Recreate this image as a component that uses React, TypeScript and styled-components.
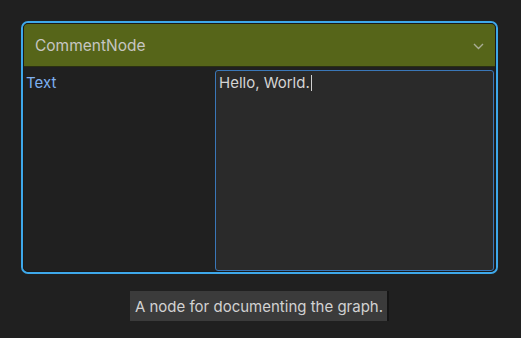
import React from 'react';
import styled, { createGlobalStyle } from 'styled-components';

const GlobalStyle = createGlobalStyle`
  html, body {
    margin: 0;
    padding: 0;
    background: #202020;
    font-family: Inter, "Noto Sans", sans-serif;
  }
`;

//#region styles
const Page = styled.div`
  width: 521px;
  height: 338px;
  box-sizing: border-box;
  padding: 21px 0 0 21px;
  display: flex;
  flex-direction: column;
  align-items: flex-start;
`;

const Node = styled.div`
  width: 477px;
  height: 253px;
  box-sizing: border-box;
  border: 2px solid #3ea8ea;
  border-radius: 7px;
  background: #202020;
  display: flex;
  flex-direction: column;
  overflow: hidden;
`;

const Inner = styled.div`
  flex: 1;
  display: flex;
  flex-direction: column;
  border: 1px solid #1a1a1a;
  border-radius: 5px;
  overflow: hidden;
`;

const Header = styled.div`
  height: 42px;
  flex: none;
  background: #566519;
  border-bottom: 1px solid #2a2f12;
  display: flex;
  align-items: center;
  justify-content: space-between;
  padding: 0 11px 0 11px;
  color: #c6c6c2;
  font-size: 15.5px;
`;

const Chevron = styled.svg`
  width: 11px;
  height: 7px;
  margin-top: 2px;
`;

const Body = styled.div`
  flex: 1;
  display: flex;
  padding: 3px 1px 0 2px;
`;

const Label = styled.div`
  width: 189px;
  color: #7eb0f0;
  font-size: 15px;
  padding-top: 3px;
`;

const Field = styled.div`
  flex: 1;
  box-sizing: border-box;
  background: #2a2a2a;
  border: 1px solid #3a77b8;
  border-radius: 3px;
  padding: 2px 3px;
  color: #d4d4d4;
  font-size: 15px;
  display: flex;
  align-items: flex-start;
`;

const Caret = styled.span`
  display: inline-block;
  width: 1px;
  height: 16px;
  background: #d0d0d0;
  margin-left: 1px;
  margin-top: 2px;
`;

const TooltipRow = styled.div`
  width: 477px;
  display: flex;
  justify-content: center;
  margin-top: 17px;
`;

const Tooltip = styled.div`
  height: 30px;
  box-sizing: border-box;
  background: #3b3b3b;
  border-right: 2px solid #151515;
  padding: 0 4px 0 5px;
  display: flex;
  align-items: center;
  color: #d2d2d2;
  font-size: 15px;
`;
//#endregion

const App: React.FunctionComponent = () => (
  <React.Fragment>
    <GlobalStyle />
    <Page>
      <Node>
        <Inner>
          <Header>
            <span>CommentNode</span>
            <Chevron viewBox="0 0 11 7">
              <polyline points="1,1 5.5,5.5 10,1" fill="none" stroke="#a9ad95" strokeWidth="1.4" />
            </Chevron>
          </Header>
          <Body>
            <Label>Text</Label>
            <Field>
              <span>Hello, World.</span>
              <Caret />
            </Field>
          </Body>
        </Inner>
      </Node>
      <TooltipRow>
        <Tooltip>A node for documenting the graph.</Tooltip>
      </TooltipRow>
    </Page>
  </React.Fragment>
);

export default App;
